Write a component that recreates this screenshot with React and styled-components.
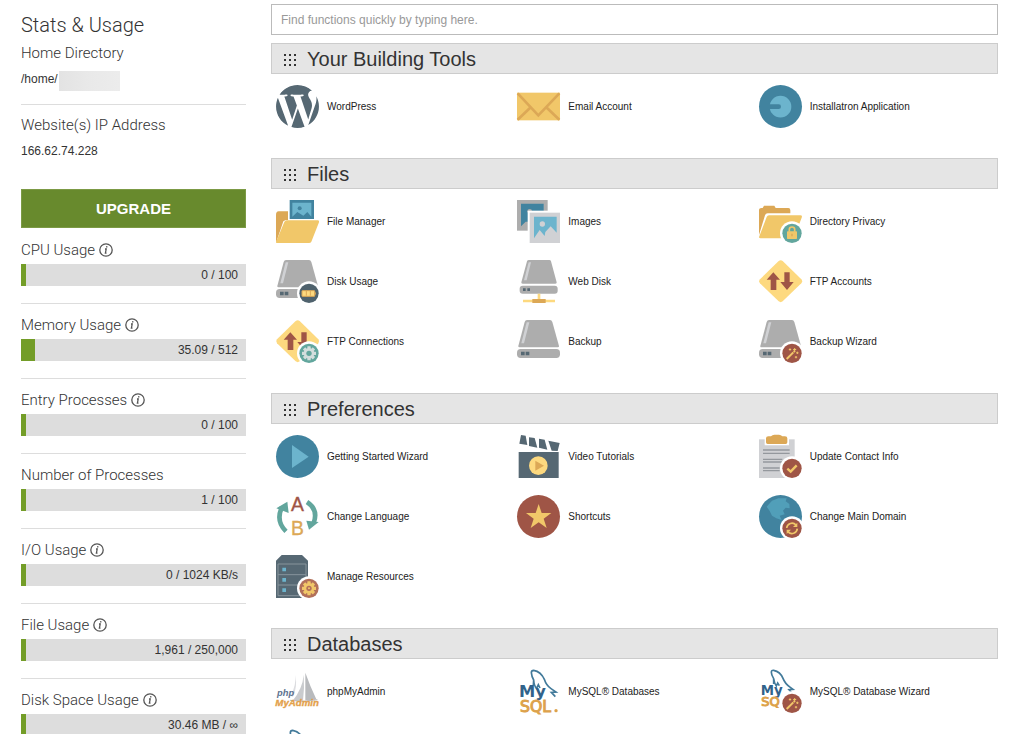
import React from 'react'
import styled, { createGlobalStyle } from 'styled-components'
import { FaWordpress } from 'react-icons/fa'

const GlobalStyle = createGlobalStyle`
  * {
    box-sizing: border-box;
  }
  body {
    margin: 0;
    background: #fff;
    color: #333;
    font-family: "Liberation Sans", Arial, sans-serif;
  }
`
const Page = styled.div`
  display: flex;
  gap: 25px;
  height: 100vh;
  padding: 0 26px 0 21px;
  overflow: hidden;
`
const Sidebar = styled.aside`
  flex: 0 0 225px;
  padding-top: 11px;
`
const SidebarTitle = styled.h1`
  margin: 0 0 4px;
  font-family: Roboto, "Liberation Sans", sans-serif;
  font-size: 20px;
  font-weight: 300;
  line-height: 28px;
`
const InfoBlock = styled.section`
  padding-bottom: ${(props) => (props.$last ? '30px' : '17px')};
  margin-bottom: ${(props) => (props.$last ? '0' : '10px')};
  border-bottom: ${(props) => (props.$last ? 'none' : '1px solid #ddd')};
`
const StatTitle = styled.h2`
  display: flex;
  align-items: center;
  gap: 4px;
  margin: 0;
  font-family: Roboto, "Liberation Sans", sans-serif;
  font-size: 15px;
  font-weight: 300;
  line-height: 20px;
`
const InfoValue = styled.div`
  display: flex;
  align-items: flex-start;
  height: 16px;
  margin-top: 8px;
  font-size: 12px;
  line-height: 16px;
`
const Mask = styled.span`
  width: 61px;
  height: 20px;
  margin-left: 1px;
  background: linear-gradient(90deg, #e3e3e3, #e9e9e9 50%, #ececec);
`
const UpgradeButton = styled.button`
  display: block;
  width: 100%;
  height: 39px;
  margin-bottom: 1px;
  border: 1px solid #7c9a45;
  background: #688a2d;
  color: #fff;
  font-family: inherit;
  font-size: 15px;
  font-weight: bold;
  cursor: pointer;
`
const Stat = styled.section`
  padding: 11px 0 17px;
  border-bottom: 1px solid #ddd;
`
const Bar = styled.div`
  position: relative;
  height: 22px;
  margin-top: 4px;
  background: #ddd;
`
const BarFill = styled.div`
  height: 100%;
  min-width: 5px;
  background: #739d28;
`
const BarText = styled.span`
  position: absolute;
  inset: 0 8px 0 auto;
  font-size: 12px;
  line-height: 22px;
`
const Main = styled.main`
  flex: 1;
  min-width: 0;
  padding-top: 4px;
`
const SearchInput = styled.input`
  display: block;
  width: 100%;
  height: 31px;
  margin-bottom: 8px;
  padding: 0 9px;
  border: 1px solid #bbb;
  background: #fff;
  color: #333;
  font-family: inherit;
  font-size: 12px;
  &::placeholder {
    color: #999;
  }
`
const Group = styled.section`
  margin-bottom: 21px;
`
const GroupHeader = styled.header`
  display: flex;
  align-items: center;
  gap: 11px;
  height: 31px;
  margin-bottom: 3px;
  padding: 0 12px;
  border: 1px solid #ccc;
  background: #e5e5e5;
`
const GroupTitle = styled.h2`
  margin: 0;
  font-size: 20px;
  font-weight: normal;
  line-height: 28px;
`
const Grip = styled.svg`
  width: 12px;
  height: 12px;
  margin-top: 3px;
`
const ItemGrid = styled.div`
  display: grid;
  grid-template-columns: repeat(3, 1fr);
  padding-left: 3px;
`
const Item = styled.a`
  display: flex;
  align-items: center;
  gap: 8px;
  height: 60px;
  padding: 8px 0 9px 2px;
  color: #222;
  font-size: 10px;
  text-decoration: none;
`
const Icon = styled.svg`
  flex: none;
  width: 43px;
  height: 43px;
  overflow: visible;
`

const SEA = '#41839f'
const SKY = '#6cb4cd'
const GREY = '#adadad'
const SILVER = '#d0d1d4'
const SLATE = '#566873'
const GOLD = '#f1c769'
const AMBER = '#dca856'
const LEMON = '#fdd97f'
const BRICK = '#9f5546'
const TEAL = '#62a69d'
const NAVY = '#31628a'
const ORANGE = '#dda24b'

const Badge = ({ color, children }) => (
  <g>
    <circle cx="99" cy="100" r="36" fill="#fff" />
    <circle cx="99" cy="100" r="29" fill={color} />
    {children}
  </g>
)

const Gear = ({ color, hole }) => (
  <g>
    {[0, 45, 90, 135].map((a) => (
      <rect key={a} x="94" y="79" width="10" height="42" rx="1" fill={color} transform={`rotate(${a} 99 100)`} />
    ))}
    <circle cx="99" cy="100" r="16" fill={color} />
    <circle cx="99" cy="100" r="8" fill={hole} />
  </g>
)

const Wand = () => (
  <Badge color={BRICK}>
    <path d="M83 117L103 97" stroke={GOLD} strokeWidth="6" />
    <path
      d="M107 84v9M102.500 88.500h9M115 95v7M111.500 98.500h7M93 85v7M89.500 88.500h7M111 108v7M107.500 111.500h7"
      stroke={GOLD}
      strokeWidth="3"
    />
    <path d="M104 96l4-4" stroke={GOLD} strokeWidth="6" />
  </Badge>
)

const Drive = () => (
  <g>
    <path d="M30 0H99Q104 0 106 6L126 78Q127 82 122 82H8Q3 82 4 78L23 6Q25 0 30 0Z" fill={GREY} />
    <path d="M29 7h8L21 70h-8Z" fill={SILVER} />
    <rect x="0" y="87" width="129" height="27" rx="11" fill={GREY} />
    <path d="M12 95h11v11H12ZM26 95h11v11H26Z" fill={SLATE} />
  </g>
)

const Diamond = () => (
  <g>
    <path d="M59 3Q65 -2 71 3L127 58Q132 64 127 70L71 124Q65 129 59 124L3 70Q-2 64 3 58Z" fill={LEMON} />
    <path d="M43 37L63 59H52V90H35V59H23Z" fill={BRICK} />
    <path d="M76 37H92V66H104L84 90L64 66H76Z" fill={BRICK} />
  </g>
)

const icons = {
  wordpress: (
    <g clipPath="url(#wordpress-disc)">
      <clipPath id="wordpress-disc">
        <circle cx="64.500" cy="64.500" r="66" />
      </clipPath>
      <FaWordpress x="-13" y="-13" size={155} color={SLATE} />
    </g>
  ),
  email: (
    <g>
      <rect x="0" y="23" width="129" height="83" fill={GOLD} />
      <path d="M2 25L64 91L127 25M2 104L42 66M127 104L87 66" fill="none" stroke={AMBER} strokeWidth="8" />
    </g>
  ),
  installatron: (
    <g>
      <circle cx="64.500" cy="64.500" r="64.500" fill={SEA} />
      <circle cx="64.500" cy="65" r="32.500" fill={SKY} />
      <path d="M30 58H59Q66 58 66 65T59 72H30Z" fill={SEA} />
    </g>
  ),
  fileManager: (
    <g>
      <path d="M0 129V45Q0 34 8 34H36V60H29L22 64L3 120Z" fill={AMBER} />
      <path d="M41 0H114V57H41Z" fill={SEA} />
      <path d="M49 8H106V50L94 36L82 47L64 36L49 50Z" fill={SKY} />
      <circle cx="71" cy="25" r="6" fill={SEA} />
      <path d="M32 61H125Q131 61 129 67L106 125Q104 129 99 129H4Q-2 129 1 123L25 66Q27 61 32 61Z" fill={GOLD} />
    </g>
  ),
  images: (
    <g>
      <rect width="92" height="92" fill={GREY} />
      <path d="M12 11H80V65H26L12 79Z" fill={SEA} />
      <circle cx="38" cy="34" r="7" fill={GREY} />
      <rect x="32" y="32" width="97" height="97" fill="#fff" />
      <rect x="38" y="38" width="91" height="91" fill={SILVER} />
      <path d="M51 50H119V98L101 79L85 96L83 108L68 90L51 115Z" fill={SKY} />
      <circle cx="76" cy="72" r="8" fill={SILVER} />
    </g>
  ),
  privacy: (
    <g>
      <path d="M0 105V31Q0 24 8 24H11L15 17H46L50 24H88Q94 24 94 31V40H26Q20 40 18 46Z" fill={AMBER} />
      <path d="M30 46H124Q131 46 128 53L106 110Q104 115 98 115H5Q-2 115 1 109L23 51Q25 46 30 46Z" fill={GOLD} />
      <Badge color={TEAL}>
        <path d="M91 95V88Q91 81 99 81T107 88V95" fill="none" stroke={GOLD} strokeWidth="5" />
        <rect x="84" y="94" width="30" height="23" rx="2" fill={GOLD} />
        <path d="M99 101v8" stroke={AMBER} strokeWidth="4" />
      </Badge>
    </g>
  ),
  diskUsage: (
    <g>
      <Drive />
      <Badge color="#4f626d">
        <rect x="78" y="92" width="38" height="17" rx="1" fill={LEMON} stroke={AMBER} strokeWidth="3" />
        <path d="M118 97v7M91 93v14M103 93v14" stroke={AMBER} strokeWidth="3" />
      </Badge>
    </g>
  ),
  webDisk: (
    <g>
      <path d="M36 0H97Q101 0 102 4L119 67Q120 71 115 71H17Q12 71 13 67L30 4Q31 0 36 0Z" fill={GREY} />
      <path d="M35 7h7L29 61h-8Z" fill={SILVER} />
      <rect x="8" y="77" width="114" height="24" rx="9" fill={GREY} />
      <path d="M18 85h8v8H18ZM31 85h8v8H31Z" fill={SLATE} />
      <path d="M66 101V119M18 123H114" stroke={LEMON} strokeWidth="8" />
      <rect x="46" y="117" width="40" height="12" fill={AMBER} />
    </g>
  ),
  ftp: <Diamond />,
  ftpConnections: (
    <g>
      <Diamond />
      <Badge color={TEAL}>
        <Gear color="#d3dedd" hole={TEAL} />
      </Badge>
    </g>
  ),
  backup: <Drive />,
  backupWizard: (
    <g>
      <Drive />
      <Wand />
    </g>
  ),
  gettingStarted: (
    <g>
      <circle cx="64.500" cy="64.500" r="64.500" fill={SEA} />
      <path d="M48 30L98 65L48 99Z" fill={SKY} />
    </g>
  ),
  video: (
    <g>
      <rect x="5" y="51" width="120" height="78" fill={SLATE} />
      <path d="M7 26L12 0L26 2L31 30ZM36 33V7L53 9L61 38ZM66 38V11L83 14L91 44ZM94 17L128 24L122 48L104 47Z" fill={SLATE} />
      <circle cx="64" cy="92" r="28" fill={LEMON} />
      <path d="M55 77L81 92L55 107Z" fill={AMBER} />
    </g>
  ),
  contact: (
    <g>
      <rect x="0" y="13" width="107" height="116" fill={SILVER} />
      <path d="M12 45H92M12 55H92M12 73H70M12 81H70M12 99H62M12 107H62" stroke="#94989d" strokeWidth="4" />
      <path d="M17 31V9H34L41 0H66L73 9H90V31Z" fill="#fff" />
      <path d="M21 22V10Q21 4 28 4H36Q40 -1 46 -1H60Q66 -1 70 4H78Q85 4 85 10V22Q85 27 80 27H26Q21 27 21 22Z" fill={AMBER} />
      <Badge color={BRICK}>
        <path d="M85 101L95 110L113 91" fill="none" stroke={GOLD} strokeWidth="7" />
      </Badge>
    </g>
  ),
  language: (
    <g>
      <path d="M30 109Q-2 78 18 36" fill="none" stroke={TEAL} strokeWidth="14" />
      <path d="M1 40L34 20L38 54Z" fill={TEAL} />
      <path d="M93 21Q128 44 113 84" fill="none" stroke={TEAL} strokeWidth="14" />
      <path d="M91 77L128 81L99 104Z" fill={TEAL} />
      <text x="64" y="47" textAnchor="middle" fontSize="58" fontFamily="Liberation Sans" fill={BRICK} stroke={BRICK} strokeWidth="1">A</text>
      <text x="64" y="121" textAnchor="middle" fontSize="58" fontFamily="Liberation Sans" fill={AMBER} stroke={AMBER} strokeWidth="1">B</text>
    </g>
  ),
  shortcuts: (
    <g>
      <circle cx="64.500" cy="64.500" r="64.500" fill={BRICK} />
      <path d="M65 27L74 54H103L80 71L89 99L65 82L41 99L50 71L27 54H56Z" fill={GOLD} />
    </g>
  ),
  domain: (
    <g>
      <circle cx="64.500" cy="64.500" r="64.500" fill={SEA} />
      <path d="M23 35L39 17L58 10H83L80 19L91 27L92 40L80 38L72 47L77 58L62 62L68 75L52 70L39 62L32 48Z" fill="#519fb9" />
      <Badge color={BRICK}>
        <path d="M83 99A16 16 0 0 1 111 90M115 101A16 16 0 0 1 87 110" fill="none" stroke={GOLD} strokeWidth="5" />
        <path d="M115 83V96H102ZM83 117V104H96Z" fill={GOLD} />
      </Badge>
    </g>
  ),
  resources: (
    <g>
      <path d="M0 129V17L17 0H78L96 17V129Z" fill={SLATE} />
      <path d="M6 27H90V122H6ZM6 59H90M6 90H90" fill="none" stroke="#87949c" strokeWidth="3" />
      <path d="M19 38h11v11H19ZM19 69h11v11H19ZM19 100h11v11H19Z" fill={SKY} />
      <Badge color="#b2705a">
        <Gear color={GOLD} hole="#b2705a" />
        <circle cx="99" cy="100" r="3" fill={GOLD} />
      </Badge>
    </g>
  ),
  phpMyAdmin: (
    <g>
      <path d="M88 8Q101 45 121 88Q103 94 88 90Z" fill="#b8babd" />
      <path d="M83 14Q80 55 50 92H81Q86 55 83 14Z" fill="#c9cbce" />
      <path d="M58 15Q61 45 44 78L51 80Q65 50 58 15Z" fill="#dcdde0" />
      <path d="M42 91Q80 98 124 89" fill="none" stroke="#b8babd" strokeWidth="3" />
      <text x="3" y="77" fontSize="28" fontWeight="bold" fontStyle="italic" fontFamily="Liberation Sans" fill="#5d7290">php</text>
      <text x="-2" y="107" fontSize="29" fontWeight="bold" fontStyle="italic" fontFamily="Liberation Sans" fill="#e3a04a" stroke="#e3a04a" strokeWidth="1">MyAdmin</text>
    </g>
  ),
  mysql: (
    <g>
      <path
        d="M49 47L50 30Q44 20 43 8Q43 1 50 1Q72 5 82 28Q88 47 102 56L117 66L103 67L115 80M50 30Q51 48 59 55L64 44L69 54"
        fill="none"
        stroke="#427a9a"
        strokeWidth="5"
      />
      <text x="6" y="82" fontSize="49" fontWeight="bold" fontFamily="DejaVu Sans" fill={NAVY}>My</text>
      <text x="9" y="127" fontSize="47" fontFamily="DejaVu Sans" fill={ORANGE} stroke={ORANGE} strokeWidth="3">SQL</text>
      <circle cx="117" cy="122" r="5" fill={ORANGE} />
    </g>
  ),
  mysqlWizard: (
    <g>
      <path
        d="M44 42L44 26Q37 15 37 7Q37 0 44 1Q64 5 72 25Q78 41 94 52L102 58L90 59L99 69M44 26Q46 41 52 48L56 39L61 47"
        fill="none"
        stroke="#427a9a"
        strokeWidth="5"
      />
      <text x="5" y="74" fontSize="40" fontWeight="bold" fontFamily="DejaVu Sans" fill={NAVY}>My</text>
      <text x="7" y="109" fontSize="39" fontFamily="DejaVu Sans" fill={ORANGE} stroke={ORANGE} strokeWidth="3">SQ</text>
      <Wand />
    </g>
  ),
}

const groups = [
  {
    title: 'Your Building Tools',
    items: [
      ['wordpress', 'WordPress'],
      ['email', 'Email Account'],
      ['installatron', 'Installatron Application'],
    ],
  },
  {
    title: 'Files',
    items: [
      ['fileManager', 'File Manager'],
      ['images', 'Images'],
      ['privacy', 'Directory Privacy'],
      ['diskUsage', 'Disk Usage'],
      ['webDisk', 'Web Disk'],
      ['ftp', 'FTP Accounts'],
      ['ftpConnections', 'FTP Connections'],
      ['backup', 'Backup'],
      ['backupWizard', 'Backup Wizard'],
    ],
  },
  {
    title: 'Preferences',
    items: [
      ['gettingStarted', 'Getting Started Wizard'],
      ['video', 'Video Tutorials'],
      ['contact', 'Update Contact Info'],
      ['language', 'Change Language'],
      ['shortcuts', 'Shortcuts'],
      ['domain', 'Change Main Domain'],
      ['resources', 'Manage Resources'],
    ],
  },
  {
    title: 'Databases',
    items: [
      ['phpMyAdmin', 'phpMyAdmin'],
      ['mysql', 'MySQL® Databases'],
      ['mysqlWizard', 'MySQL® Database Wizard'],
      ['mysql', 'Remote MySQL®'],
    ],
  },
]

const stats = [
  { name: 'CPU Usage', text: '0 / 100', percent: 0, info: true },
  { name: 'Memory Usage', text: '35.09 / 512', percent: 6, info: true },
  { name: 'Entry Processes', text: '0 / 100', percent: 0, info: true },
  { name: 'Number of Processes', text: '1 / 100', percent: 1 },
  { name: 'I/O Usage', text: '0 / 1024 KB/s', percent: 0, info: true },
  { name: 'File Usage', text: '1,961 / 250,000', percent: 1, info: true },
  { name: 'Disk Space Usage', text: '30.46 MB / ∞', percent: 0, info: true },
]

const InfoIcon = () => (
  <svg width="14" height="14" viewBox="0 0 14 14" aria-hidden="true">
    <circle cx="7" cy="7" r="6.200" fill="none" stroke="#555" strokeWidth="1.300" />
    <path d="M7.900 3.200L7.600 4.500M6 6H7.200L6.400 10.200H7.500" fill="none" stroke="#555" strokeWidth="1.300" />
  </svg>
)

const App = () => {
  const [query, setQuery] = React.useState('')

  return (
    <>
      <GlobalStyle />
      <Page>
        <Sidebar>
          <SidebarTitle>Stats &amp; Usage</SidebarTitle>
          <InfoBlock>
            <StatTitle>Home Directory</StatTitle>
            <InfoValue>/home/<Mask /></InfoValue>
          </InfoBlock>
          <InfoBlock $last>
            <StatTitle>Website(s) IP Address</StatTitle>
            <InfoValue>166.62.74.228</InfoValue>
          </InfoBlock>
          <UpgradeButton type="button">UPGRADE</UpgradeButton>
          {stats.map((s) => (
            <Stat key={s.name}>
              <StatTitle>
                {s.name}
                {s.info && <InfoIcon />}
              </StatTitle>
              <Bar role="meter" aria-label={s.name} aria-valuenow={s.percent} aria-valuetext={s.text}>
                <BarFill style={{ width: `${s.percent}%` }} />
                <BarText>{s.text}</BarText>
              </Bar>
            </Stat>
          ))}
        </Sidebar>
        <Main>
          <SearchInput
            type="text"
            aria-label="Find functions"
            placeholder="Find functions quickly by typing here."
            value={query}
            onChange={(e) => setQuery(e.target.value)}
          />
          {groups.map((group) => (
            <Group key={group.title}>
              <GroupHeader>
                <Grip viewBox="0 0 12 12" aria-hidden="true">
                  {[0, 5, 10].map((y) =>
                    [0, 5, 10].map((x) => <rect key={`${x}-${y}`} x={x} y={y} width="2" height="2" fill="#333" />)
                  )}
                </Grip>
                <GroupTitle>{group.title}</GroupTitle>
              </GroupHeader>
              <ItemGrid>
                {group.items
                  .filter(([, label]) => label.toLowerCase().includes(query.toLowerCase()))
                  .map(([icon, label]) => (
                    <Item key={label} href="#">
                      <Icon viewBox="0 0 129 129" aria-hidden="true">{icons[icon]}</Icon>
                      {label}
                    </Item>
                  ))}
              </ItemGrid>
            </Group>
          ))}
        </Main>
      </Page>
    </>
  )
}

export default App
